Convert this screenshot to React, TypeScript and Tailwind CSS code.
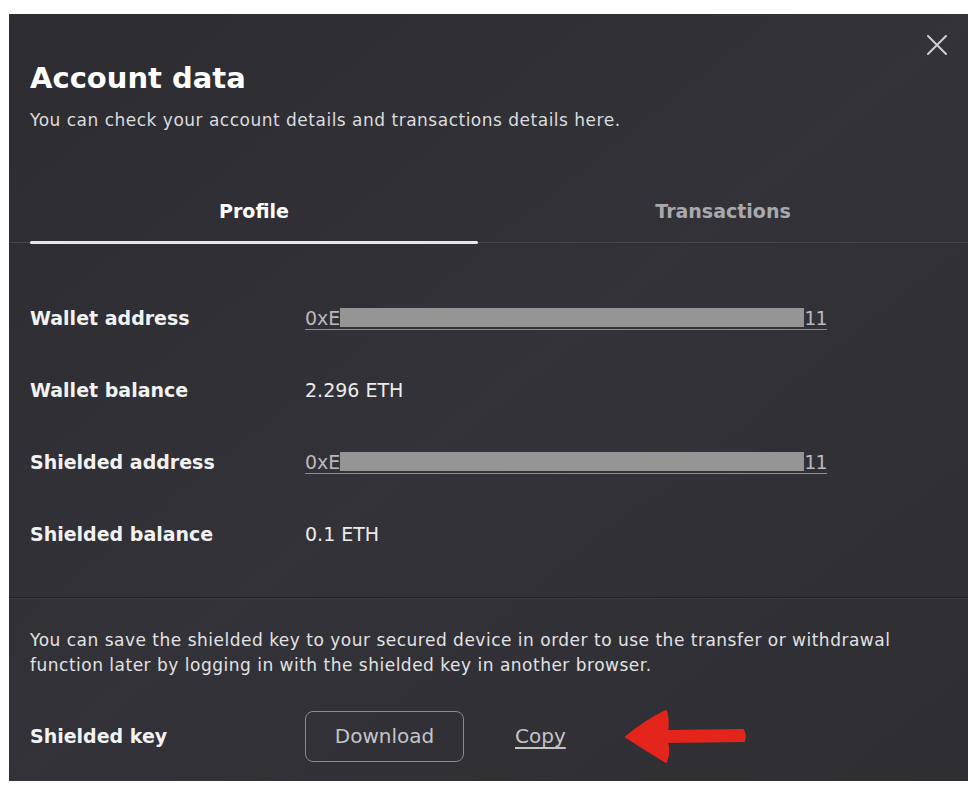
import React from 'react';

const FONT = { fontFamily: '"DejaVu Sans", "Liberation Sans", sans-serif' };

function AddressValue() {
  return (
    <span className="inline-flex items-center text-[19px] text-[#b9b9be] border-b border-[#8d8d92] leading-[22px]">
      <span>0xE</span>
      <span className="inline-block w-[464px] h-[19px] bg-[#959595]" />
      <span className="tracking-[-1px]">11</span>
    </span>
  );
}

function Row({ label, children }: { label: string; children: React.ReactNode }) {
  return (
    <div className="h-[72px] flex items-center">
      <div className="w-[275px] text-[19px] font-semibold text-[#f2f2f2]">{label}</div>
      <div className="text-[19px] text-[#ececec]">{children}</div>
    </div>
  );
}

function RedArrow() {
  return (
    <svg width="124" height="56" viewBox="0 0 124 56" className="ml-[58px]">
      <path
        d="M2 29 Q20 14 42 3 Q45 12 43 23 L119 22 Q122 27 120 33 L43 34 Q46 44 42 54 Q22 42 2 29 Z"
        fill="#e3251b"
        stroke="#e3251b"
        strokeWidth="2"
        strokeLinejoin="round"
      />
    </svg>
  );
}

export default function App() {
  return (
    <div className="min-h-screen bg-white pt-[14px] pl-[9px]" style={FONT}>
      <div className="relative w-[959px] h-[767px] flex flex-col bg-gradient-to-br from-[#2c2c31] via-[#323238] to-[#2e2e33]">
        {/* close */}
        <button className="absolute top-[21px] right-[21px] w-[20px] h-[20px]">
          <svg width="20" height="20" viewBox="0 0 20 20">
            <path d="M1 1 L19 19 M19 1 L1 19" stroke="#cfcfd2" strokeWidth="2" strokeLinecap="round" />
          </svg>
        </button>

        {/* header */}
        <div className="px-[21px] pt-[46px]">
          <h1 className="text-[29px] leading-[36px] font-bold text-white">Account data</h1>
          <p className="mt-[12px] text-[17px] leading-[24px] tracking-[0.5px] text-[#dcdcdf]">
            You can check your account details and transactions details here.
          </p>
        </div>

        {/* tabs */}
        <div className="mt-[48px] flex border-b border-[#46464c] pl-[21px]">
          <div className="relative w-[448px] h-[62px] flex items-center justify-center text-[19px] font-semibold text-white">
            Profile
            <div className="absolute left-0 right-0 bottom-[-2px] h-[3px] bg-[#e6e6e8] rounded-full" />
          </div>
          <div className="flex-1 h-[62px] flex items-center justify-center text-[19px] font-semibold text-[#a9a9ad]">
            Transactions
          </div>
        </div>

        {/* profile rows */}
        <div className="px-[21px] pt-[39px] pb-[27px] border-b border-[#222226]">
          <Row label="Wallet address">
            <AddressValue />
          </Row>
          <Row label="Wallet balance">2.296 ETH</Row>
          <Row label="Shielded address">
            <AddressValue />
          </Row>
          <Row label="Shielded balance">0.1 ETH</Row>
        </div>

        {/* shielded key */}
        <div className="flex-1 border-t border-[#3b3b41] px-[21px] pt-[29px]">
          <p className="text-[17px] leading-[25px] tracking-[0.5px] text-[#e2e2e4]">
            You can save the shielded key to your secured device in order to use the transfer or withdrawal function later by logging in with the shielded key in another browser.
          </p>
          <div className="mt-[30px] flex items-center">
            <div className="w-[275px] text-[19px] font-semibold text-[#f2f2f2]">Shielded key</div>
            <button className="w-[159px] h-[51px] rounded-lg border border-[#8a8a8f] text-[20px] text-[#c4c4c8]">
              Download
            </button>
            <button className="ml-[51px] text-[20px] text-[#c4c4c8] underline underline-offset-4">Copy</button>
            <RedArrow />
          </div>
        </div>
      </div>
    </div>
  );
}
